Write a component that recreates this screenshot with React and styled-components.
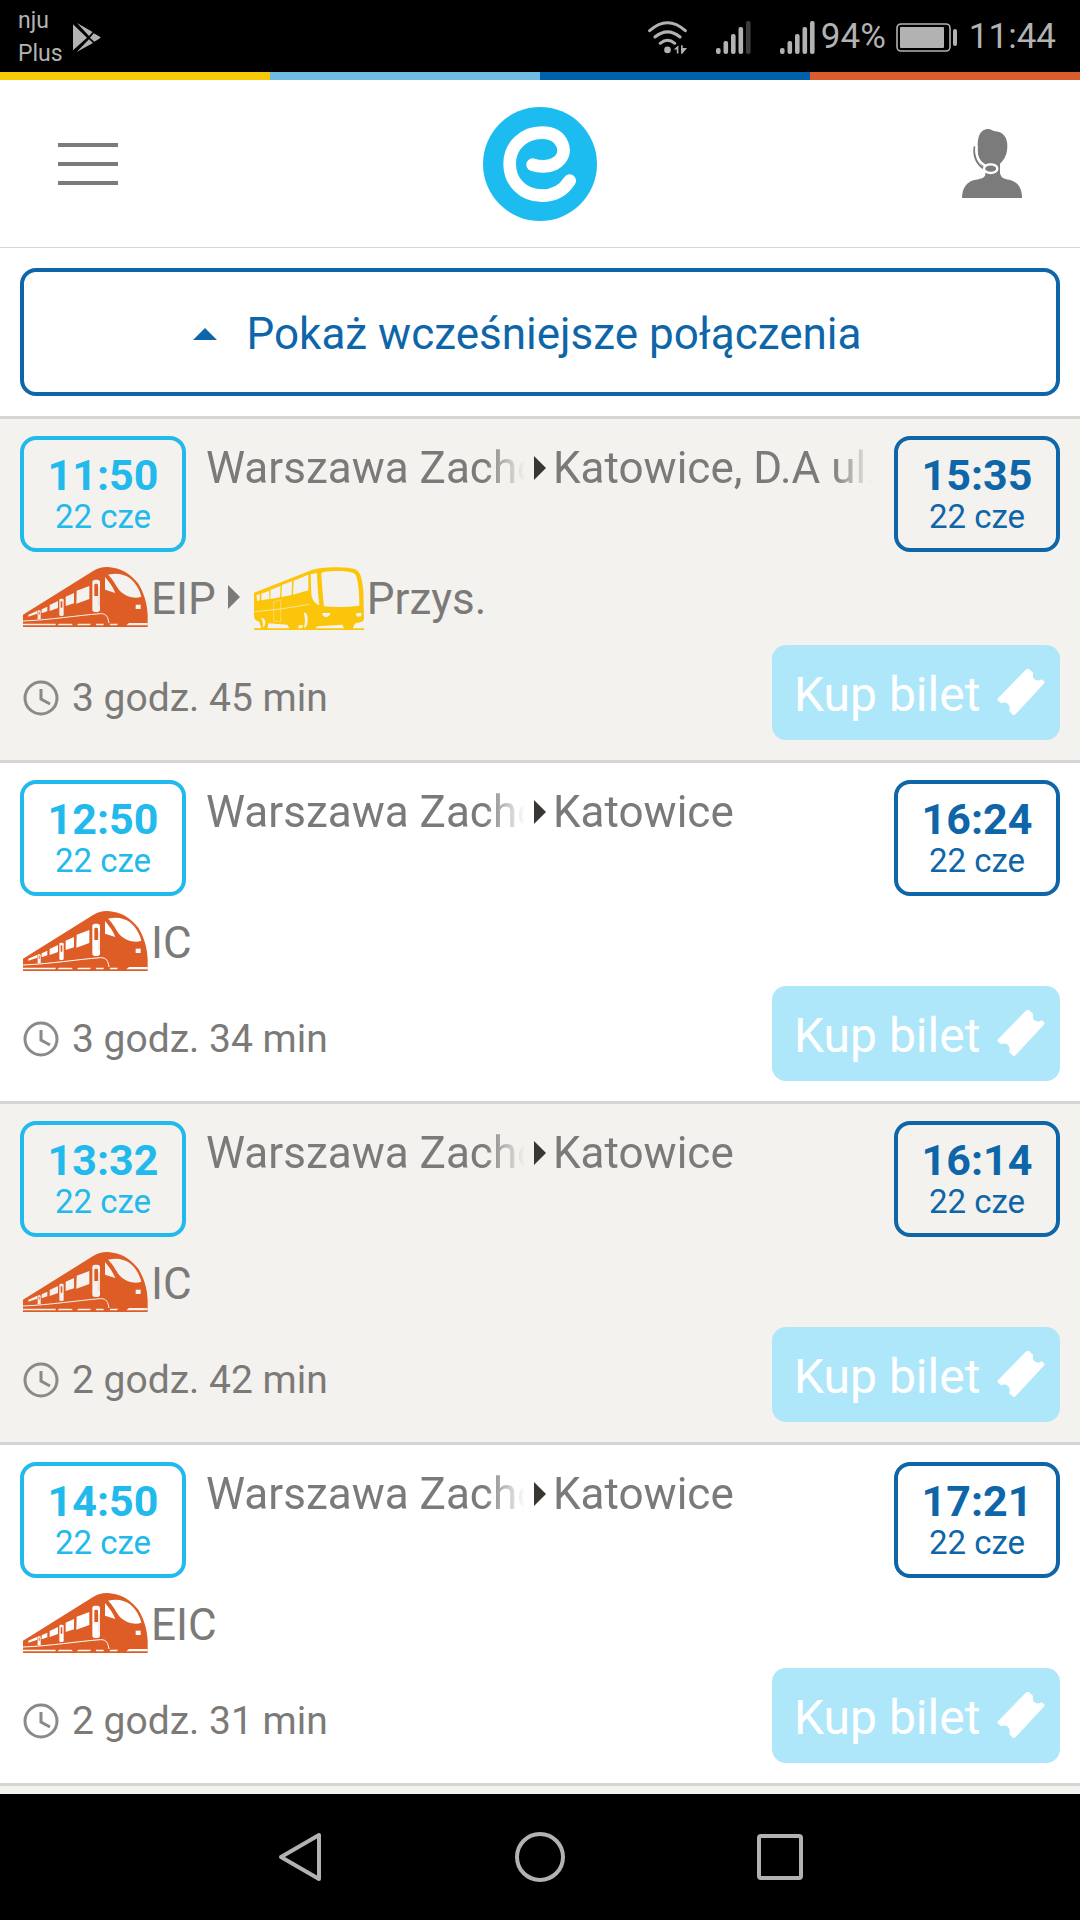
import React from 'react';
import styled, { createGlobalStyle } from 'styled-components';

const GlobalStyle = createGlobalStyle`
  * {
    box-sizing: border-box;
  }

  body {
    margin: 0;
    font-family: Roboto, sans-serif;
    color: #7b7a78;
    background: #fff;
  }

  button {
    margin: 0;
    padding: 0;
    border: none;
    background: none;
    color: inherit;
    font-family: inherit;
    cursor: pointer;
  }

  svg {
    display: block;
    flex-shrink: 0;
  }
`;

const Page = styled.div`
  display: flex;
  flex-direction: column;
  height: 100vh;
  overflow: hidden;
`;

const StatusBar = styled.div`
  display: flex;
  align-items: center;
  justify-content: space-between;
  flex-shrink: 0;
  height: 72px;
  padding: 2px 24px 0 18px;
  background: #000;
  color: #b2b2b2;
`;

const StatusGroup = styled.div`
  display: flex;
  align-items: center;
`;

const Carrier = styled.div`
  margin-right: 10px;
  font-size: 23px;
  line-height: 33px;
`;

const StatusIcons = styled.div`
  display: flex;
  gap: 29px;
  margin-right: 6px;
`;

const StatusText = styled.span`
  font-size: 35px;
  line-height: 70px;
`;

const Battery = styled.div`
  margin: 0 12px 0 10px;
`;

const Stripe = styled.div`
  display: flex;
  flex-shrink: 0;
  height: 8px;
`;

const StripePart = styled.div`
  flex: 1;
  background: ${({ $color }) => $color};
`;

const Header = styled.header`
  display: grid;
  grid-template-columns: 1fr auto 1fr;
  align-items: center;
  flex-shrink: 0;
  height: 168px;
  padding: 0 58px;
  border-bottom: 1px solid #d6d5d3;
  background: #fff;
`;

const MenuButton = styled.button`
  display: flex;
  flex-direction: column;
  justify-content: space-between;
  width: 60px;
  height: 42px;
`;

const MenuLine = styled.span`
  height: 4px;
  background: #7b7b7b;
`;

const AccountButton = styled.button`
  justify-self: end;
`;

const Connections = styled.main`
  flex: 1;
  min-height: 0;
  overflow: hidden;
  background: #f4f2ee;
`;

const EarlierBar = styled.div`
  padding: 20px;
  background: #fff;
`;

const EarlierButton = styled.button`
  display: flex;
  align-items: center;
  justify-content: center;
  gap: 30px;
  width: 100%;
  height: 128px;
  padding: 4px 26px 0 0;
  border: 4px solid #0e66a9;
  border-radius: 16px;
  color: #0e66a9;
  font-size: 44px;
`;

const List = styled.ul`
  margin: 0;
  padding: 0;
  list-style: none;
  border-bottom: 3px solid #d6d5d3;
`;

const Connection = styled.li`
  --row: ${({ $shaded }) => ($shaded ? '#f4f2ee' : '#fff')};
  display: flex;
  flex-direction: column;
  gap: 15px;
  padding: 17px 20px 20px;
  border-top: 3px solid #d6d5d3;
  background: var(--row);
`;

const TopLine = styled.div`
  display: flex;
  gap: 20px;
`;

const TimeBox = styled.div`
  flex-shrink: 0;
  width: 166px;
  padding: 11px 0 13px;
  border: 4px solid;
  border-radius: 16px;
  color: ${({ $arrival }) => ($arrival ? '#0e66a9' : '#22b9ec')};
  text-align: center;
`;

const Time = styled.div`
  font-size: 43px;
  font-weight: 700;
  line-height: 48px;
`;

const Day = styled.div`
  font-size: 33px;
  line-height: 36px;
`;

const Stations = styled.div`
  display: grid;
  grid-template-columns: 1fr 26px 1fr;
  align-items: center;
  justify-items: center;
  flex: 1;
  min-width: 0;
  height: 64px;
  color: #3a3632;
`;

const Station = styled.div`
  width: 100%;
  overflow: hidden;
  color: #7b7a78;
  font-size: 44px;
  line-height: 64px;
  white-space: nowrap;
  mask-image: linear-gradient(to right, #000 calc(100% - 42px), transparent calc(100% - 2px));
`;

const Carriers = styled.div`
  display: flex;
  align-items: flex-start;
  padding-left: 3px;
`;

const CarrierName = styled.span`
  padding: 4px 0 0 3px;
  font-size: 44px;
  line-height: 56px;
`;

const CarrierArrow = styled.span`
  display: flex;
  align-items: center;
  height: 60px;
  margin: 0 14px 0 12px;
`;

const BottomLine = styled.div`
  display: flex;
  align-items: center;
  justify-content: space-between;
`;

const Duration = styled.div`
  display: flex;
  align-items: center;
  gap: 13px;
  padding: 10px 0 0 3px;
  font-size: 39px;
`;

const BuyButton = styled.button`
  display: flex;
  align-items: center;
  justify-content: space-between;
  width: 288px;
  height: 95px;
  padding: 0 15px 0 22px;
  border-radius: 14px;
  background: #afe7fa;
  color: #fff;
  font-size: 48px;
`;

const BuyLabel = styled.span`
  padding-top: 4px;
`;

const NavBar = styled.nav`
  display: flex;
  align-items: center;
  justify-content: center;
  gap: 180px;
  flex-shrink: 0;
  height: 126px;
  background: #000;
`;

const NavButton = styled.button`
  display: flex;
  align-items: center;
  justify-content: center;
  width: 60px;
  height: 60px;
`;

const PlayIcon = () => (
  <svg width="28" height="29" viewBox="219 66 84 87" fill="#b2b2b2">
    <path d="M219 70 261 110 219 148ZM231 66 278 93 267 105ZM281 97 300 107Q303 109 300 112L283 122 270 110ZM267 115 279 126 230 153Z" />
  </svg>
);

const WifiIcon = () => (
  <svg width="39" height="33" viewBox="86 57 118 99" fill="none" stroke="#b2b2b2" strokeWidth="9" strokeLinecap="round">
    <path d="M91 86Q145 38 199 86M107 105Q145 74 183 105M123 124Q145 106 167 124" />
    <circle cx="145" cy="144" r="10" fill="#b2b2b2" stroke="none" />
    <path d="M164 143 178 130V155H173V143ZM186 130H191V138H204L190 156H186Z" fill="#b2b2b2" stroke="none" />
  </svg>
);

const SignalIcon = ({ bars }) => (
  <svg width="35" height="33" viewBox="0 0 35 33">
    {[6, 13, 20, 27, 33].map((height, i) => (
      <rect
        key={height}
        x={i * 7.5}
        y={33 - height}
        width="4.6"
        height={height}
        rx="2"
        fill={i < bars ? '#b2b2b2' : '#3c3c3c'}
      />
    ))}
  </svg>
);

const BatteryIcon = () => (
  <svg width="61" height="29" viewBox="0 0 61 29">
    <rect x="1" y="1" width="53" height="27" rx="4" fill="none" stroke="#b2b2b2" strokeWidth="1.6" />
    <rect x="4" y="4" width="44" height="21" rx="1" fill="#b2b2b2" />
    <rect x="57" y="6" width="4" height="17" rx="2" fill="#b2b2b2" />
  </svg>
);

const Logo = () => (
  <svg width="114" height="114" viewBox="69 51 342 342">
    <circle cx="240" cy="222" r="171" fill="#1dbcf0" />
    <path
      d="M218 224C238 231 265 231 283 222C308 209 316 185 307 163C297 138 273 128 246 128C192 128 149 167 149 221C149 276 189 317 246 317C284 317 311 301 329 272"
      fill="none"
      stroke="#fff"
      strokeWidth="38"
      strokeLinecap="round"
    />
  </svg>
);

const AccountIcon = () => (
  <svg width="60" height="69" viewBox="66 60 180 207">
    <path
      d="M66 267C66 236 81 217 107 212C124 209 133 207 136 197L136 181C119 168 113 144 113 116C112 82 121 60 145 60C153 60 156 65 166 67C190 69 202 85 202 112C202 137 192 153 180 164V192C183 207 192 210 207 212C233 217 246 238 246 267Z"
      fill="#7b7b7b"
    />
    <path d="M104 112C99 140 110 167 134 180" fill="none" stroke="#7b7b7b" strokeWidth="6" />
    <path d="M110 110C106 138 117 160 136 170" fill="none" stroke="#fff" strokeWidth="7" />
    <ellipse cx="152" cy="179" rx="20" ry="13" fill="#7b7b7b" stroke="#fff" strokeWidth="7" />
  </svg>
);

const TriangleRight = () => (
  <svg width="12" height="24" viewBox="0 0 12 24" fill="currentColor">
    <path d="M0 0 12 12 0 24Z" />
  </svg>
);

const TriangleUp = () => (
  <svg width="24" height="12" viewBox="0 0 24 12" fill="currentColor">
    <path d="M0 12 12 0 24 12Z" />
  </svg>
);

const TrainIcon = () => (
  <svg width="125" height="60" viewBox="0 0 375 180">
    <path
      d="M0 143 209 13C229 1 247-2 270 2C302 7 326 25 346 50C363 78 373 110 374 145V180H0Z"
      fill="#de5c26"
    />
    <g fill="var(--row)">
      <path d="M255 23C279 17 303 20 321 34C339 49 350 69 355 89C336 97 308 89 291 72C279 58 272 38 255 23Z" />
      <path d="M246 30C257 43 270 60 277 78L246 68Z" />
      <path d="M161 71 199 57V96L160 110ZM128 89 153 78V109L128 117ZM80 114 105 102V123L80 132ZM56 127 73 119V133L56 139ZM16 143 43 131V140L16 149Z" />
      <path d="M338 113H353V126H338Z" />
      <path d="M0 170H98V175H0ZM108 170H145L150 175H104ZM166 170H205L200 175H162ZM218 170H242V175H220ZM262 170H286L281 175H260ZM318 168H374V175H310Z" />
      <rect x="208" y="38" width="23" height="97" rx="8" />
      <rect x="109" y="95" width="13" height="52" rx="4" />
      <rect x="44" y="130" width="9" height="27" rx="2" />
    </g>
    <g fill="#de5c26">
      <path d="M214 54Q214 50 218 50H221Q225 50 225 54V87H214ZM113 103H118V122H113ZM47 134H50V143H47Z" />
      <path d="M227 62H229V118H227Z" opacity=".4" />
    </g>
    <path d="M0 162C80 159 165 145 232 140C251 139 255 151 258 168" fill="none" stroke="var(--row)" strokeWidth="3" />
  </svg>
);

const BusIcon = () => (
  <svg width="110" height="63" viewBox="102 50 330 189">
    <path
      d="M102 127 270 61C300 48 381 48 405 57C421 64 426 82 430 120L432 206Q430 216 413 217C399 218 402 231 398 234H432V239H102V234H124C120 226 122 216 113 212C102 208 102 199 102 190Z"
      fill="#fbc60a"
    />
    <g fill="var(--row)">
      <path d="M304 73Q303 65 312 65C340 61 378 61 399 67Q407 70 409 78C417 105 418 137 418 166Q365 173 312 168Q309 145 304 73Z" />
      <path d="M272 72 291 68C292 100 294 134 298 165C283 159 276 147 274 132Z" />
      <path d="M221 91 265 73V120L219 133ZM186 104 216 93 215 134 184 140ZM152 118 182 107 180 141 151 146ZM124 130 148 121V146L124 150ZM109 135 119 131V150L112 152Z" />
      <path d="M307 188H331Q330 200 316 200Q306 199 307 188ZM409 188H424V197Q417 201 409 197Z" />
      <path d="M123 202Q137 203 136 220 135 230 128 232 131 216 123 202ZM251 186Q265 188 263 211 262 230 252 233 258 209 251 186Z" />
      <path d="M145 219 202 223Q205 229 209 234H143ZM237 225 249 224Q249 231 244 234H234ZM292 228 368 223Q368 230 374 234H284Q290 232 292 228Z" />
    </g>
    <g fill="none" stroke="var(--row)" strokeWidth="2">
      <path d="M104 184Q185 178 268 162" />
      <path d="M161 154 182 150V214L161 212Z" opacity=".6" />
    </g>
  </svg>
);

const ClockIcon = () => (
  <svg width="36" height="36" viewBox="0 0 36 36" fill="none" stroke="#8b8a87" strokeWidth="3">
    <circle cx="18" cy="18" r="16" />
    <path d="M18 9V19L27 24" />
  </svg>
);

const TicketIcon = () => (
  <svg width="48" height="48" viewBox="711 117 146 146" fill="#fff">
    <path d="M800 118Q804 114 808 117L821 129Q817 142 826 149Q835 156 847 148L854 154Q857 157 854 161L767 255Q762 260 758 255L748 245Q753 231 744 223Q735 216 723 221L714 213Q711 210 714 206Z" />
  </svg>
);

const vehicles = {
  train: TrainIcon,
  bus: BusIcon,
};

const connections = [
  {
    departure: '11:50',
    arrival: '15:35',
    to: 'Katowice, D.A ul.',
    carriers: [
      { type: 'train', name: 'EIP' },
      { type: 'bus', name: 'Przys.' },
    ],
    duration: '3 godz. 45 min',
  },
  {
    departure: '12:50',
    arrival: '16:24',
    to: 'Katowice',
    carriers: [{ type: 'train', name: 'IC' }],
    duration: '3 godz. 34 min',
  },
  {
    departure: '13:32',
    arrival: '16:14',
    to: 'Katowice',
    carriers: [{ type: 'train', name: 'IC' }],
    duration: '2 godz. 42 min',
  },
  {
    departure: '14:50',
    arrival: '17:21',
    to: 'Katowice',
    carriers: [{ type: 'train', name: 'EIC' }],
    duration: '2 godz. 31 min',
  },
];

function ConnectionRow({ connection, shaded }) {
  return (
    <Connection $shaded={shaded}>
      <TopLine>
        <TimeBox>
          <Time>{connection.departure}</Time>
          <Day>22 cze</Day>
        </TimeBox>
        <Stations>
          <Station>Warszawa Zacho</Station>
          <TriangleRight />
          <Station>{connection.to}</Station>
        </Stations>
        <TimeBox $arrival>
          <Time>{connection.arrival}</Time>
          <Day>22 cze</Day>
        </TimeBox>
      </TopLine>
      <Carriers>
        {connection.carriers.map(({ type, name }, i) => {
          const Vehicle = vehicles[type];
          return (
            <React.Fragment key={name}>
              {i > 0 && (
                <CarrierArrow>
                  <TriangleRight />
                </CarrierArrow>
              )}
              <Vehicle />
              <CarrierName>{name}</CarrierName>
            </React.Fragment>
          );
        })}
      </Carriers>
      <BottomLine>
        <Duration>
          <ClockIcon />
          {connection.duration}
        </Duration>
        <BuyButton type="button">
          <BuyLabel>Kup bilet</BuyLabel>
          <TicketIcon />
        </BuyButton>
      </BottomLine>
    </Connection>
  );
}

function App() {
  return (
    <Page>
      <GlobalStyle />
      <StatusBar>
        <StatusGroup>
          <Carrier>
            nju
            <br />
            Plus
          </Carrier>
          <PlayIcon />
        </StatusGroup>
        <StatusGroup>
          <StatusIcons>
            <WifiIcon />
            <SignalIcon bars={4} />
            <SignalIcon bars={5} />
          </StatusIcons>
          <StatusText>94%</StatusText>
          <Battery>
            <BatteryIcon />
          </Battery>
          <StatusText>11:44</StatusText>
        </StatusGroup>
      </StatusBar>
      <Stripe>
        <StripePart $color="#f8c907" />
        <StripePart $color="#70bbe2" />
        <StripePart $color="#0060aa" />
        <StripePart $color="#da5c2c" />
      </Stripe>
      <Header>
        <MenuButton type="button" aria-label="Menu">
          <MenuLine />
          <MenuLine />
          <MenuLine />
        </MenuButton>
        <a href="#start" aria-label="Strona główna">
          <Logo />
        </a>
        <AccountButton type="button" aria-label="Konto">
          <AccountIcon />
        </AccountButton>
      </Header>
      <Connections>
        <EarlierBar>
          <EarlierButton type="button">
            <TriangleUp />
            Pokaż wcześniejsze połączenia
          </EarlierButton>
        </EarlierBar>
        <List>
          {connections.map((connection, i) => (
            <ConnectionRow key={connection.departure} connection={connection} shaded={i % 2 === 0} />
          ))}
        </List>
      </Connections>
      <NavBar>
        <NavButton type="button" aria-label="Wstecz">
          <svg width="44" height="50" viewBox="0 0 44 50" fill="none" stroke="#b2b2b2" strokeWidth="4" strokeLinejoin="round">
            <path d="M41 3V47L3 25Z" />
          </svg>
        </NavButton>
        <NavButton type="button" aria-label="Ekran główny">
          <svg width="50" height="50" viewBox="0 0 50 50" fill="none" stroke="#b2b2b2" strokeWidth="4">
            <circle cx="25" cy="25" r="23" />
          </svg>
        </NavButton>
        <NavButton type="button" aria-label="Ostatnie">
          <svg width="46" height="46" viewBox="0 0 46 46" fill="none" stroke="#b2b2b2" strokeWidth="4">
            <rect x="2" y="2" width="42" height="42" rx="2" />
          </svg>
        </NavButton>
      </NavBar>
    </Page>
  );
}

export default App;
